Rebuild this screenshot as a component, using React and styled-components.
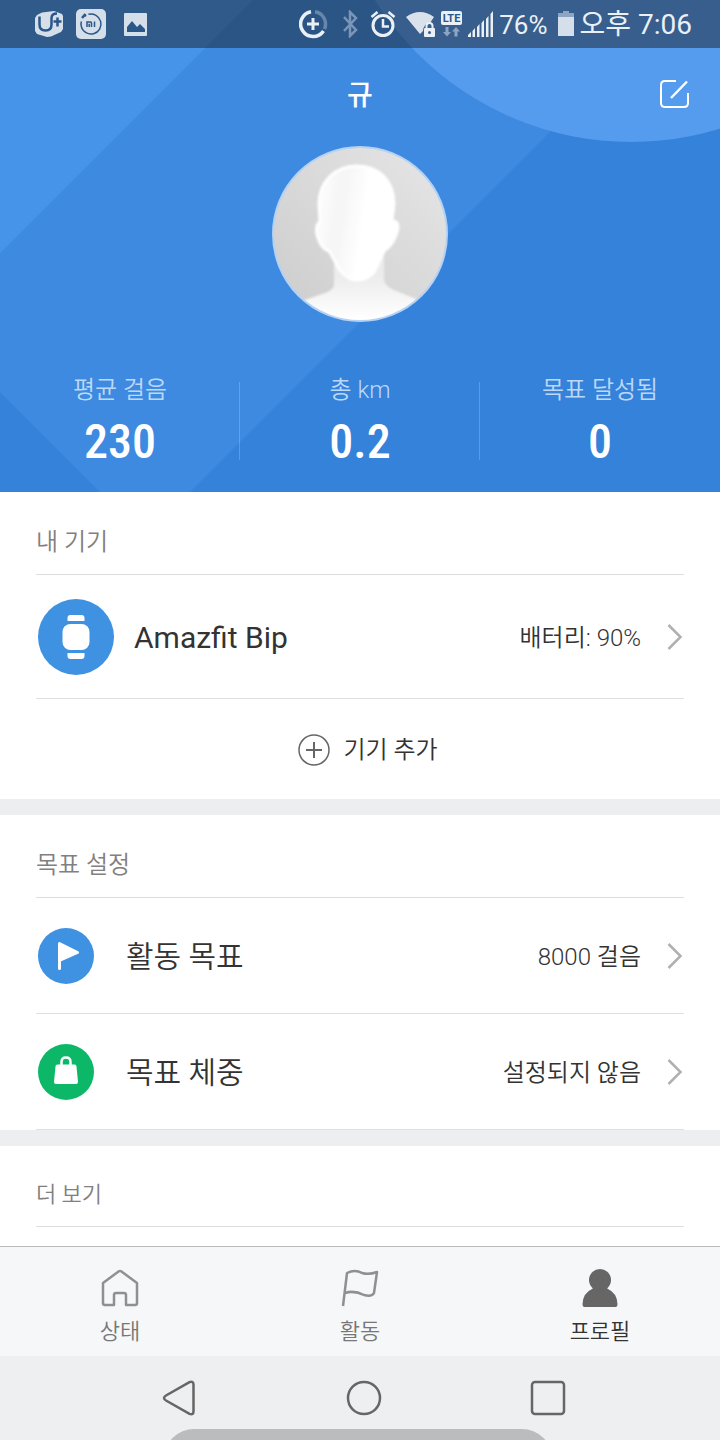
import React from "react";
import styled, { createGlobalStyle } from "styled-components";

const stats = [
  { label: "평균 걸음", value: "230" },
  { label: "총 km", value: "0.2" },
  { label: "목표 달성됨", value: "0" },
];

const App = () => (
  <Screen>
    <GlobalStyle />
    <Header>
      <HeaderBackdrop />
      <StatusBar />
      <TitleBar>
        <UserName>규</UserName>
        <EditButton type="button" aria-label="편집">
          <EditIcon />
        </EditButton>
      </TitleBar>
      <Avatar />
      <Stats>
        {stats.map((stat) => (
          <Stat key={stat.label}>
            <StatLabel>{stat.label}</StatLabel>
            <StatValue>{stat.value}</StatValue>
          </Stat>
        ))}
      </Stats>
    </Header>

    <Content>
      <Section>
        <SectionTitle>내 기기</SectionTitle>
        <Row href="#device" $height={124}>
          <WatchIcon />
          <RowTitle $gap={20} $weight={400}>
            Amazfit Bip
          </RowTitle>
          <RowValue>배터리: 90%</RowValue>
          <ChevronIcon />
        </Row>
        <AddButton type="button">
          <PlusIcon />
          기기 추가
        </AddButton>
      </Section>

      <Section>
        <SectionTitle>목표 설정</SectionTitle>
        <Row href="#activity-goal" $height={116}>
          <GoalIcon />
          <RowTitle $gap={32}>활동 목표</RowTitle>
          <RowValue>8000 걸음</RowValue>
          <ChevronIcon />
        </Row>
        <Row href="#weight-goal" $height={116}>
          <WeightIcon />
          <RowTitle $gap={32}>목표 체중</RowTitle>
          <RowValue>설정되지 않음</RowValue>
          <ChevronIcon />
        </Row>
      </Section>

      <Section>
        <SectionTitle $small>더 보기</SectionTitle>
      </Section>
    </Content>

    <TabBar>
      <Tab href="#status">
        <HomeIcon />
        상태
      </Tab>
      <Tab href="#activity">
        <FlagIcon />
        활동
      </Tab>
      <Tab href="#profile" $active aria-current="page">
        <ProfileIcon />
        프로필
      </Tab>
    </TabBar>

    <SystemNav>
      <NavButton type="button" aria-label="뒤로">
        <svg width="36" height="36" viewBox="0 0 36 36">
          <path d="M27.5 2.2 4 15.5q-4 2.5 0 5l23.5 13.3q4 1.5 4-2.5V4.7q0-4-4-2.5Z" />
        </svg>
      </NavButton>
      <NavButton type="button" aria-label="홈">
        <svg width="36" height="36" viewBox="0 0 36 36">
          <circle cx="18" cy="18" r="16" />
        </svg>
      </NavButton>
      <NavButton type="button" aria-label="최근 앱">
        <svg width="36" height="36" viewBox="0 0 36 36">
          <rect x="2" y="2" width="32" height="32" rx="3" />
        </svg>
      </NavButton>
      <Toast />
    </SystemNav>
  </Screen>
);

const StatusBar = () => (
  <StatusWrapper>
    <StatusGroup $gap={12}>
      <svg width="30" height="28" viewBox="0 0 30 28">
        <path d="M3 5 8 2.5 20 1l8 3 1 2v13l-2 3-10 4.5-4 .5-10-3-2-3V8Z" fill="#d5dfe9" />
        <path
          d="M5.5 6.5v8q0 6 6 6t6-6V8q0-4.5 5.500-4.500M19.5 11.500h8M23.500 7.500v9"
          fill="none"
          stroke="#2a578a"
          strokeWidth="2.5"
        />
      </svg>
      <svg width="30" height="30" viewBox="0 0 30 30">
        <rect width="30" height="30" rx="5" fill="#d5dfe9" />
        <circle
          cx="15"
          cy="15"
          r="10"
          fill="none"
          stroke="#2a578a"
          strokeWidth="1.5"
          strokeDasharray="52 6 2 3"
          transform="rotate(-105 15 15)"
        />
        <path d="m6 9 3.5-4" stroke="#2a578a" strokeWidth="2.5" />
        <path
          d="M11 18v-5h3.5q1 0 1 1v4M13.2 14.8V18M18.5 12.5V18"
          fill="none"
          stroke="#2a578a"
          strokeWidth="1.5"
        />
      </svg>
      <svg width="30" height="24" viewBox="-3 0 30 24">
        <rect x="3" y="1" width="23" height="23" rx="1" fill="#d5dfe9" />
        <path d="M6 20v-5l5-6 5 6 3-3 5 5v3Z" fill="#2a578a" />
      </svg>
    </StatusGroup>
    <StatusGroup $gap={5}>
      <svg width="38" height="30" viewBox="0 0 38 30" fill="none" stroke="#eaf0f6" strokeWidth="3.5">
        <path d="M12 2.7A12.5 12.5 0 1 0 24.5 22" />
        <path d="M16 2.7A12.5 12.5 0 0 1 25.5 20" stroke="#6787ab" />
        <path d="M14 9v12M8 15h12" strokeWidth="3" />
      </svg>
      <svg width="18" height="28" viewBox="0 0 18 28" fill="none" stroke="#7a95b5" strokeWidth="2.5">
        <path d="m2 7 12 13-6 6V2l6 6L2 21" />
      </svg>
      <Spacer />
      <svg width="26" height="28" viewBox="0 0 26 28" fill="none" stroke="#eaf0f6" strokeWidth="3">
        <circle cx="13" cy="15.5" r="10" />
        <path d="M13 9v7.5h6M1.5 7l6-5M24.5 7l-6-5" strokeWidth="2.5" />
      </svg>
      <Spacer />
      <svg width="30" height="28" viewBox="0 0 30 28">
        <path d="M0 7q14-10 28 0l-4 6q-6 0-7 8l-3 3Z" fill="#d9e1eb" />
        <rect x="18" y="18" width="11" height="9" rx="1" fill="#eaf0f6" />
        <path d="M20.5 18v-2q0-3 3-3t3 3v2" fill="none" stroke="#eaf0f6" strokeWidth="2" />
        <circle cx="23.5" cy="22.5" r="1.5" fill="#355f91" />
      </svg>
      <svg width="22" height="28" viewBox="0 0 22 28">
        <rect x="0" y="1" width="21" height="14" rx="2" fill="#eaf0f6" />
        <text x="10.5" y="12" textAnchor="middle" fontSize="11" fontWeight="700" fill="#2a578a">
          LTE
        </text>
        <path d="M4.5 17h3v5H10l-4 4.5L2 22h2.5ZM13.5 26.5h3v-5H19L15 17l-4 4.5h2.5Z" fill="#8ea5c1" />
      </svg>
      <svg width="26" height="26" viewBox="0 0 26 26" fill="#eaf0f6">
        <path d="M0 26v-2l3-3v5ZM4.5 26v-6L7 17v9ZM9 26V16l2.5-3v13ZM13.5 26V12L16 9v17ZM18 26V8l2.5-3v21ZM22.5 26V3L25 0v26Z" />
      </svg>
      <Percent>76%</Percent>
      <svg width="18" height="26" viewBox="0 0 18 26">
        <path d="M1 2h5V0h6v2h5v5H1Z" fill="#8ea5c1" />
        <path d="M1 6h16v19H1Z" fill="#d5dfe9" />
      </svg>
      <Clock>오후 7:06</Clock>
    </StatusGroup>
  </StatusWrapper>
);

const HeaderBackdrop = () => (
  <Backdrop viewBox="0 0 720 492" preserveAspectRatio="xMidYMin slice" aria-hidden="true">
    <rect width="720" height="492" fill="#3582da" />
    <path d="M0 0h682L190 492h-90L0 392Z" fill="#3e8ae0" />
    <path d="M0 0h253L0 253Z" fill="#4594ea" />
    <circle cx="631" cy="-160" r="302" fill="#559cef" />
  </Backdrop>
);

const Avatar = () => (
  <AvatarImage viewBox="0 0 176 176" role="img" aria-label="규">
    <defs>
      <linearGradient id="avatar-bg" x1="1" y1="0" x2="0" y2="1">
        <stop offset="0" stopColor="#e6e6e6" />
        <stop offset="1" stopColor="#cccccc" />
      </linearGradient>
      <linearGradient id="avatar-neck" x1="0" y1="0" x2="0" y2="1">
        <stop offset="0.3" stopColor="#ececec" />
        <stop offset="0.85" stopColor="#ffffff" />
      </linearGradient>
      <linearGradient id="avatar-face" x1="0" y1="0" x2="1" y2="0.2">
        <stop offset="0" stopColor="#ffffff" />
        <stop offset="0.35" stopColor="#f5f5f5" />
        <stop offset="0.65" stopColor="#ffffff" />
      </linearGradient>
      <filter id="avatar-soft">
        <feGaussianBlur stdDeviation="1.3" />
      </filter>
      <clipPath id="avatar-clip">
        <circle cx="88" cy="88" r="87" />
      </clipPath>
    </defs>
    <g clipPath="url(#avatar-clip)">
      <rect width="176" height="176" fill="url(#avatar-bg)" />
      <g filter="url(#avatar-soft)">
        <path
          d="M62 116v24q-2 5-12 8l-20 7-16 10v20h150v-20l-20-12-22-9q-9-4-10-10v-28Z"
          fill="url(#avatar-neck)"
        />
        <path
          d="M85 20C107 20 122 35 122 58L120 75c7-1 7 8 4 14-3 8-6 12-11 15-4 6-7 16-11 22-5 6-10 8-17 8-8 0-13-4-17-10-4-5-7-14-11-19-6-2-9-7-11-13-3-8-1-15 2-16L47 60C46 36 63 20 85 20Z"
          fill="url(#avatar-face)"
          stroke="#ffffff"
          strokeWidth="3"
        />
      </g>
    </g>
    <circle cx="88" cy="88" r="87" fill="none" stroke="#b5d1f3" strokeWidth="2" />
  </AvatarImage>
);

const EditIcon = () => (
  <svg width="30" height="30" viewBox="0 0 30 30" fill="none" stroke="#ffffff" strokeWidth="2">
    <path d="M17 2H6Q2 2 2 6v18q0 4 4 4h19q4 0 4-4V14" />
    <path d="M12 19 28 2.5" strokeWidth="2.5" />
  </svg>
);

const WatchIcon = () => (
  <svg width="76" height="76" viewBox="0 0 76 76">
    <circle cx="38" cy="38" r="38" fill="#3f91e1" />
    <g fill="#ffffff">
      <path d="M29.5 22v-3q0-3 3-3h11q3 0 3 3v3Z" />
      <rect x="24.5" y="25" width="27" height="26" rx="8" />
      <path d="M29.5 54h17v3q0 3-3 3h-11q-3 0-3-3Z" />
    </g>
  </svg>
);

const GoalIcon = () => (
  <svg width="56" height="56" viewBox="0 0 56 56">
    <circle cx="28" cy="28" r="28" fill="#3f91e1" />
    <path
      d="M21.5 15.5V40.5M21.5 15.5 39.5 24.5 21.5 32.5Z"
      fill="#ffffff"
      stroke="#ffffff"
      strokeWidth="3"
      strokeLinecap="round"
      strokeLinejoin="round"
    />
  </svg>
);

const WeightIcon = () => (
  <svg width="56" height="56" viewBox="0 0 56 56">
    <circle cx="28" cy="28" r="28" fill="#0cb868" />
    <path d="M19.5 20.5h17q2 0 2 2L40 38q0 2-2 2H18q-2 0-2-2l1.5-15.5q0-2 2-2Z" fill="#ffffff" />
    <path d="M23.5 21v-3q0-4.5 4.5-4.5t4.5 4.5v3" fill="none" stroke="#ffffff" strokeWidth="2.5" />
  </svg>
);

const PlusIcon = () => (
  <svg width="32" height="32" viewBox="0 0 32 32" fill="none" stroke="#666666">
    <circle cx="16" cy="16" r="15" strokeWidth="1.5" />
    <path d="M16 8v16M8 16h16" strokeWidth="2" />
  </svg>
);

const ChevronIcon = () => (
  <svg width="17" height="28" viewBox="0 0 17 28">
    <path d="m1.5 2 12 12-12 12" fill="none" stroke="#b0b0b0" strokeWidth="2.5" />
  </svg>
);

const HomeIcon = () => (
  <svg width="40" height="40" viewBox="0 0 40 40" fill="none" stroke="#909090" strokeWidth="2.5" strokeLinejoin="round">
    <path d="M3 15 18.5 3.5q1.5-1 3 0L37 15v20q0 2-2 2h-9V27q0-2-2-2h-8q-2 0-2 2v10H5q-2 0-2-2Z" />
  </svg>
);

const FlagIcon = () => (
  <svg width="40" height="40" viewBox="0 0 40 40" fill="none" stroke="#909090" strokeWidth="2.5" strokeLinejoin="round">
    <path d="M3 38 7 5q8-4 15 0 7 2 15-1l-3 21q-2 4-10 2-10-5-19-2" />
  </svg>
);

const ProfileIcon = () => (
  <svg width="40" height="40" viewBox="0 0 40 40" fill="#666666">
    <circle cx="20" cy="12" r="11" />
    <path d="M13 19q1 1-1 2Q3 25 2.5 36q0 3 2 3h31q2 0 2-3Q37 25 28 21q-2-1-1-2Z" />
  </svg>
);

const GlobalStyle = createGlobalStyle`
  *,
  *::before,
  *::after {
    box-sizing: border-box;
  }

  body {
    margin: 0;
    font-family: Roboto, "Noto Sans CJK KR", sans-serif;
    color: #333333;
    background: #ffffff;
  }

  button {
    padding: 0;
    border: none;
    background: none;
    font: inherit;
    color: inherit;
    cursor: pointer;
  }

  a {
    color: inherit;
    text-decoration: none;
  }

  svg {
    display: block;
    flex-shrink: 0;
  }
`;

const Screen = styled.div`
  display: flex;
  flex-direction: column;
  height: 100vh;
  overflow: hidden;
`;

const Header = styled.header`
  position: relative;
  isolation: isolate;
  flex-shrink: 0;
  display: flex;
  flex-direction: column;
  padding-bottom: 22px;
  color: #ffffff;
`;

const Backdrop = styled.svg`
  position: absolute;
  inset: 0;
  z-index: -1;
  width: 100%;
  height: 100%;
`;

const StatusWrapper = styled.div`
  display: flex;
  align-items: center;
  justify-content: space-between;
  height: 48px;
  padding: 0 28px 0 34px;
  background: rgba(20, 20, 20, 0.45);
  color: #eaf0f6;
`;

const StatusGroup = styled.div`
  display: flex;
  align-items: center;
  gap: ${(p) => p.$gap}px;
`;

const Spacer = styled.span`
  width: 0;
`;

const Percent = styled.span`
  margin-right: 4px;
  padding-top: 2px;
  font-size: 26px;
  line-height: 32px;
`;

const Clock = styled.span`
  padding-top: 2px;
  font-size: 28px;
  line-height: 32px;
`;

const TitleBar = styled.div`
  display: grid;
  grid-template-columns: 1fr auto 1fr;
  align-items: center;
  height: 92px;
  padding: 0 31px;
`;

const UserName = styled.h1`
  grid-column: 2;
  margin: 0;
  padding-top: 4px;
  font-size: 28px;
  line-height: 40px;
  font-weight: 500;
`;

const EditButton = styled.button`
  justify-self: end;
`;

const AvatarImage = styled.svg`
  align-self: center;
  width: 176px;
  height: 176px;
  margin-top: 6px;
`;

const Stats = styled.dl`
  display: grid;
  grid-template-columns: repeat(3, 1fr);
  margin: 50px 0 0;
`;

const Stat = styled.div`
  display: flex;
  flex-direction: column;
  align-items: center;
  position: relative;

  & + &::before {
    content: "";
    position: absolute;
    left: -1px;
    top: 10px;
    bottom: 10px;
    width: 1px;
    background: rgba(255, 255, 255, 0.2);
  }
`;

const StatLabel = styled.dt`
  font-size: 24px;
  line-height: 36px;
  font-weight: 350;
  color: #bdd8f6;
`;

const StatValue = styled.dd`
  margin: 0;
  padding-top: 6px;
  font-family: "Roboto Condensed", "Liberation Sans Narrow", Roboto, sans-serif;
  font-size: 48px;
  line-height: 56px;
  font-weight: 500;
`;

const Content = styled.main`
  flex: 1;
  min-height: 0;
  overflow: hidden;
`;

const Section = styled.section`
  padding: 0 36px;

  & + & {
    border-top: 16px solid #edeef0;
  }
`;

const SectionTitle = styled.h2`
  margin: 0;
  padding: 34px 0 16px;
  border-bottom: 1px solid #dddddd;
  font-size: ${(p) => (p.$small ? 22 : 24)}px;
  line-height: ${(p) => (p.$small ? 30 : 32)}px;
  font-weight: 350;
  color: #808080;
`;

const Row = styled.a`
  display: flex;
  align-items: center;
  height: ${(p) => p.$height}px;
  padding-left: 2px;
  border-bottom: 1px solid #e0e0e0;
`;

const RowTitle = styled.span`
  flex: 1;
  margin-left: ${(p) => p.$gap}px;
  padding-top: 2px;
  font-size: 30px;
  line-height: 40px;
  font-weight: ${(p) => p.$weight ?? 350};
`;

const RowValue = styled.span`
  margin-right: 26px;
  padding-top: 2px;
  font-size: 24px;
  line-height: 32px;
  font-weight: 350;
`;

const AddButton = styled.button`
  display: flex;
  align-items: center;
  justify-content: center;
  gap: 13px;
  width: 100%;
  height: 100px;
  padding: 2px 0 0 16px;
  font-size: 24px;
  line-height: 32px;
  font-weight: 350;
`;

const TabBar = styled.nav`
  flex-shrink: 0;
  display: grid;
  grid-template-columns: repeat(3, 1fr);
  height: 110px;
  border-top: 1px solid #b9bbbd;
  background: #f6f7f9;
`;

const Tab = styled.a`
  display: flex;
  flex-direction: column;
  align-items: center;
  gap: 8px;
  padding-top: 21px;
  font-size: 22px;
  line-height: 32px;
  font-weight: 350;
  color: ${(p) => (p.$active ? "#333333" : "#777777")};
`;

const SystemNav = styled.nav`
  position: relative;
  flex-shrink: 0;
  display: flex;
  align-items: center;
  justify-content: space-between;
  height: 84px;
  padding: 0 154px 0 162px;
  overflow: hidden;
  background: #eeeff1;
`;

const NavButton = styled.button`
  fill: none;
  stroke: #666666;
  stroke-width: 2.5px;
`;

/* top edge of the message bubble that slides in from below */
const Toast = styled.div`
  position: absolute;
  left: 164px;
  right: 168px;
  top: 73px;
  height: 60px;
  border-radius: 30px;
  background: #bbbcbd;
`;

export default App;
